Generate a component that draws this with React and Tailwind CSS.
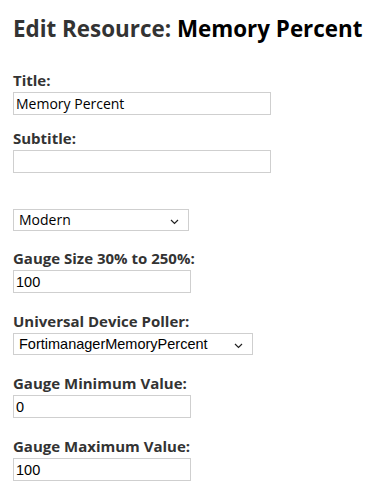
import React from "react";

const labelCls = "block text-[15px] leading-[20px] font-bold text-[#333]";
const inputCls =
  "block h-[23px] border border-[#cfcfcf] bg-white px-[2px] text-black outline-none";

const Chevron = () => (
  <svg width="9" height="6" viewBox="0 0 9 6" className="absolute top-[9px] right-[9px]">
    <path d="M1 1l3.5 3.5L8 1" fill="none" stroke="#222" strokeWidth="1.2" />
  </svg>
);

const Field = ({ label, value, width, className = "", font = "'Open Sans', sans-serif", size = 14 }) => (
  <div className={className}>
    <label className={labelCls}>{label}</label>
    <input
      className={`${inputCls} mt-[2px]`}
      style={{ width, fontFamily: font, fontSize: size }}
      defaultValue={value}
    />
  </div>
);

const Select = ({ value, width, font = "'Open Sans', sans-serif", size = 14 }) => (
  <div className="relative h-[22px] border border-[#cfcfcf] bg-white" style={{ width }}>
    <div className="pl-[5px] leading-[20px] text-black" style={{ fontFamily: font, fontSize: size }}>
      {value}
    </div>
    <Chevron />
  </div>
);

const arial = "'Liberation Sans', Arial, sans-serif";

export default function App() {
  return (
    <div className="min-h-[488px] bg-white pl-[13px] pt-[14px]" style={{ fontFamily: "'Open Sans', sans-serif" }}>
      <h1 className="text-[22.4px] leading-[30px] font-bold text-[#333] whitespace-nowrap">
        Edit Resource: <span className="text-black">Memory Percent</span>
      </h1>

      <Field className="mt-[26px]" label="Title:" value="Memory Percent" width={258} />
      <Field className="mt-[13px]" label="Subtitle:" value="" width={258} />

      <div className="mt-[36px]">
        <Select value="Modern" width={176} />
      </div>

      <Field className="mt-[17px]" label="Gauge Size 30% to 250%:" value="100" width={178} font={arial} size={14.5} />

      <div className="mt-[18px]">
        <label className={labelCls}>Universal Device Poller:</label>
        <div className="mt-[2px]">
          <Select value="FortimanagerMemoryPercent" width={240} font={arial} size={14.5} />
        </div>
      </div>

      <Field className="mt-[18px]" label="Gauge Minimum Value:" value="0" width={178} font={arial} size={14.5} />
      <Field className="mt-[18px]" label="Gauge Maximum Value:" value="100" width={178} font={arial} size={14.5} />
    </div>
  );
}
